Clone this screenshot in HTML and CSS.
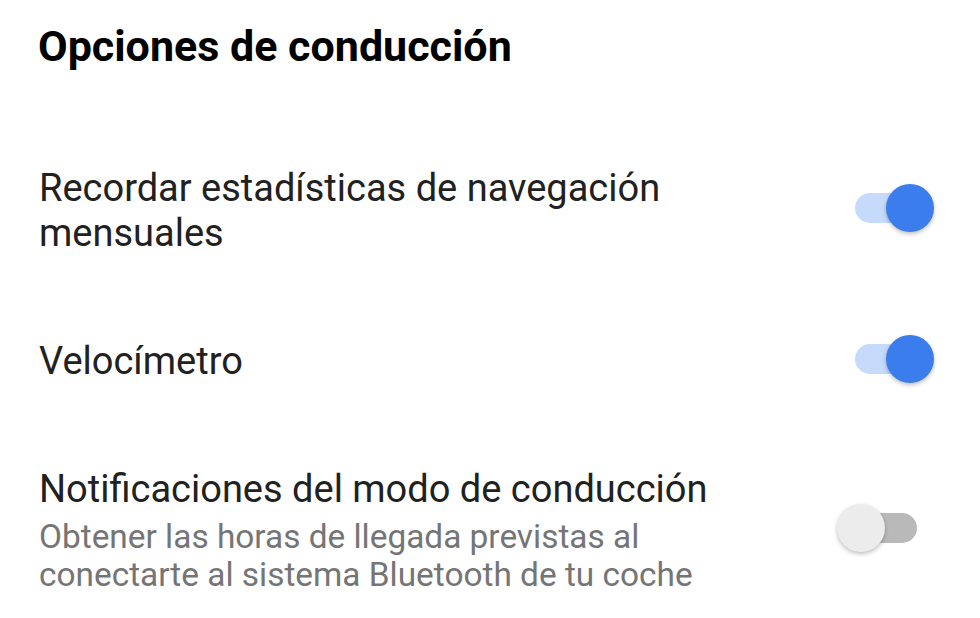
FILE: index.html
```html
<!DOCTYPE html>
<html lang="es">
<head>
    <meta charset="UTF-8">
    <meta name="viewport" content="width=device-width, initial-scale=1.0">
    <title>Opciones de conducción</title>
    <link rel="stylesheet" href="styles.css">
</head>
<body>
    <div class="settings">
        <h1 class="section-title">Opciones de conducción</h1>

        <div class="setting-row">
            <div class="setting-text">
                <div class="setting-label">Recordar estadísticas de navegación mensuales</div>
            </div>
            <div class="switch on"><span class="thumb"></span></div>
        </div>

        <div class="setting-row">
            <div class="setting-text">
                <div class="setting-label">Velocímetro</div>
            </div>
            <div class="switch on"><span class="thumb"></span></div>
        </div>

        <div class="setting-row">
            <div class="setting-text">
                <div class="setting-label">Notificaciones del modo de conducción</div>
                <div class="setting-summary">Obtener las horas de llegada previstas al conectarte al sistema Bluetooth de tu coche</div>
            </div>
            <div class="switch"><span class="thumb"></span></div>
        </div>
    </div>
</body>
</html>
```

FILE: styles.css
```css
body {
    margin: 0;
    background: #ffffff;
    font-family: Roboto, "Noto Sans", sans-serif;
    color: #212121;
}

.settings {
    padding: 21px 46px 0 39px;
}

.section-title {
    margin: 0 0 0 -1px;
    font-size: 43px;
    font-weight: 700;
    line-height: 50px;
    color: #000000;
}

.setting-row {
    display: flex;
    align-items: center;
    justify-content: space-between;
}

.section-title + .setting-row {
    margin-top: 95px;
}

.setting-row + .setting-row {
    margin-top: 83px;
}

.setting-text {
    max-width: 700px;
}

.setting-label {
    font-size: 38px;
    line-height: 45px;
}

.setting-summary {
    margin-top: 6px;
    font-size: 33.4px;
    line-height: 38px;
    color: #757575;
}

/* switch: thumb overhangs both ends of the track */
.switch {
    position: relative;
    width: 62px;
    height: 30px;
    margin: 0 17px 6px 0;
    border-radius: 15px;
    background: #b9b9b9;
    flex-shrink: 0;
}

.switch .thumb {
    position: absolute;
    top: -9px;
    left: -18px;
    width: 48px;
    height: 48px;
    border-radius: 50%;
    background: #ececec;
    box-shadow: 0 2px 4px rgba(0, 0, 0, 0.25);
}

.switch.on {
    background: #c6dafc;
}

.switch.on .thumb {
    left: 31px;
    background: #3b7ded;
}
```
